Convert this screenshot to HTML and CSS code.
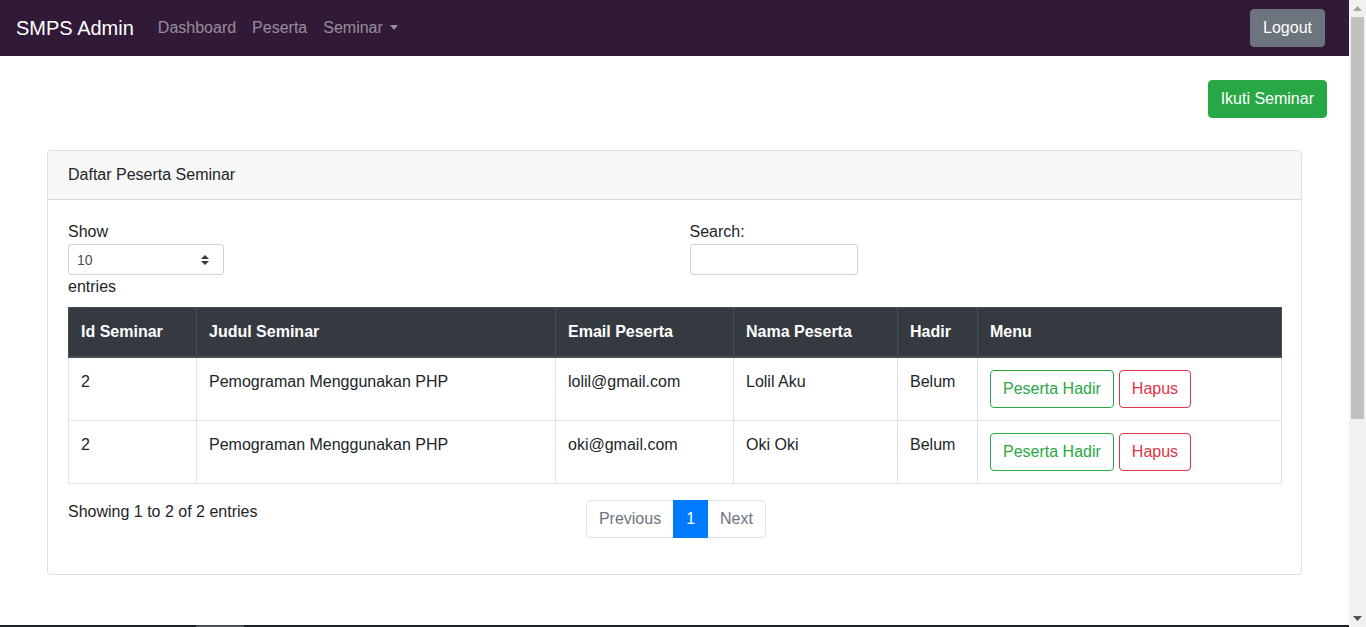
FILE: index.html
```html
<!DOCTYPE html>
<html lang="id">
<head>
<meta charset="utf-8">
<title>SMPS Admin - Daftar Peserta Seminar</title>
<link rel="stylesheet" href="styles.css">
</head>
<body>
<div class="screen">
  <div class="page">
    <nav class="navbar">
      <div class="nav-left">
        <a class="brand" href="#">SMPS Admin</a>
        <ul class="nav-links">
          <li><a class="nav-link" href="#">Dashboard</a></li>
          <li><a class="nav-link" href="#">Peserta</a></li>
          <li><a class="nav-link dropdown" href="#">Seminar<span class="caret"></span></a></li>
        </ul>
      </div>
      <button class="btn btn-secondary logout">Logout</button>
    </nav>

    <main class="content">
      <div class="actions">
        <button class="btn btn-success">Ikuti Seminar</button>
      </div>

      <section class="card">
        <div class="card-header">Daftar Peserta Seminar</div>
        <div class="card-body">
          <div class="row">
            <div class="col col-half">
              <div class="dt-length">
                <div>Show</div>
                <div class="select-box">
                  <select class="select">
                    <option>10</option>
                    <option>25</option>
                    <option>50</option>
                    <option>100</option>
                  </select>
                  <svg class="select-icon" width="8" height="10" viewBox="0 0 8 10"><path d="M4 0 L8 4 H0 Z M0 6 H8 L4 10 Z" fill="#343a40"/></svg>
                </div>
                <div>entries</div>
              </div>
            </div>
            <div class="col col-half">
              <div class="dt-filter">
                <div>Search:</div>
                <input class="search-input" type="search">
              </div>
            </div>
          </div>

          <table class="table">
            <colgroup>
              <col class="w-id"><col class="w-judul"><col class="w-email"><col class="w-nama"><col class="w-hadir"><col class="w-menu">
            </colgroup>
            <thead>
              <tr>
                <th>Id Seminar</th>
                <th>Judul Seminar</th>
                <th>Email Peserta</th>
                <th>Nama Peserta</th>
                <th>Hadir</th>
                <th>Menu</th>
              </tr>
            </thead>
            <tbody>
              <tr>
                <td>2</td>
                <td>Pemograman Menggunakan PHP</td>
                <td>lolil@gmail.com</td>
                <td>Lolil Aku</td>
                <td>Belum</td>
                <td><div class="menu-btns"><button class="btn btn-outline-success">Peserta Hadir</button><button class="btn btn-outline-danger">Hapus</button></div></td>
              </tr>
              <tr>
                <td>2</td>
                <td>Pemograman Menggunakan PHP</td>
                <td>oki@gmail.com</td>
                <td>Oki Oki</td>
                <td>Belum</td>
                <td><div class="menu-btns"><button class="btn btn-outline-success">Peserta Hadir</button><button class="btn btn-outline-danger">Hapus</button></div></td>
              </tr>
            </tbody>
          </table>

          <div class="row">
            <div class="col col-5">
              <div class="dt-info">Showing 1 to 2 of 2 entries</div>
            </div>
            <div class="col col-7">
              <ul class="pagination">
                <li class="page-item disabled"><a class="page-link first" href="#">Previous</a></li>
                <li class="page-item active"><a class="page-link" href="#">1</a></li>
                <li class="page-item disabled"><a class="page-link last" href="#">Next</a></li>
              </ul>
            </div>
          </div>
        </div>
      </section>
    </main>

    <footer class="footer"><span class="footer-mark"></span></footer>
  </div>

  <div class="scrollbar">
    <div class="sb-btn"><svg width="9" height="5" viewBox="0 0 9 5"><path d="M0 5 L4.5 0 L9 5 Z" fill="#a3a3a3"/></svg></div>
    <div class="sb-thumb"></div>
    <div class="sb-track"></div>
    <div class="sb-btn"><svg width="9" height="5" viewBox="0 0 9 5"><path d="M0 0 L9 0 L4.5 5 Z" fill="#505050"/></svg></div>
  </div>
</div>
</body>
</html>
```
FILE: styles.css
```css
* { box-sizing: border-box; }

html, body {
  margin: 0;
  padding: 0;
}

body {
  font-family: "Liberation Sans", Arial, sans-serif;
  font-size: 16px;
  line-height: 1.5;
  color: #212529;
  background: #fff;
}

.screen {
  display: flex;
  width: 1366px;
  height: 627px;
  overflow: hidden;
}

.page {
  flex: 1;
  min-width: 0;
  display: flex;
  flex-direction: column;
}

/* Navbar */
.navbar {
  height: 56px;
  flex-shrink: 0;
  background: #301a37;
  display: flex;
  align-items: center;
  justify-content: space-between;
  padding: 0 16px;
}

.nav-left {
  display: flex;
  align-items: center;
}

.brand {
  color: #fff;
  text-decoration: none;
  font-size: 20px;
  line-height: 30px;
  margin-right: 16px;
}

.nav-links {
  list-style: none;
  margin: 0;
  padding: 0;
  display: flex;
}

.nav-link {
  display: block;
  padding: 8px 8px;
  color: rgba(255, 255, 255, 0.5);
  text-decoration: none;
}

.caret {
  display: inline-block;
  margin-left: 7px;
  vertical-align: 3px;
  border-top: 5px solid rgba(255, 255, 255, 0.5);
  border-left: 4.5px solid transparent;
  border-right: 4.5px solid transparent;
}

/* Buttons */
.btn {
  display: inline-block;
  font-family: inherit;
  font-size: 16px;
  line-height: 24px;
  padding: 6px 12px;
  border: 1px solid transparent;
  border-radius: 4px;
  background: transparent;
  cursor: pointer;
  white-space: nowrap;
}

.btn-secondary {
  background: #6c757d;
  border-color: #6c757d;
  color: #fff;
}

.logout {
  margin-right: 8px;
}

.btn-success {
  background: #28a745;
  border-color: #28a745;
  color: #fff;
}

.btn-outline-success {
  color: #28a745;
  border-color: #28a745;
}

.btn-outline-danger {
  color: #dc3545;
  border-color: #dc3545;
}

/* Content */
.content {
  flex-shrink: 0;
}

.actions {
  display: flex;
  justify-content: flex-end;
  padding: 24px 22px 0 0;
}

.card {
  margin: 32px 47px 0;
  border: 1px solid rgba(0, 0, 0, 0.125);
  border-radius: 4px;
  background: #fff;
}

.card-header {
  padding: 12px 20px;
  background: rgba(0, 0, 0, 0.03);
  border-bottom: 1px solid rgba(0, 0, 0, 0.125);
  border-radius: 3px 3px 0 0;
}

.card-body {
  padding: 20px;
}

.row {
  display: flex;
  margin: 0 -15px;
}

.col {
  padding: 0 15px;
}

.col-half { flex: 0 0 50%; }
.col-5 { flex: 0 0 41.6667%; }
.col-7 { flex: 0 0 58.3333%; }

.select-box {
  display: flex;
  align-items: center;
  width: 156px;
  height: 31px;
  border: 1px solid #ced4da;
  border-radius: 3px;
  padding: 0 14px 0 8px;
  background: #fff;
}

.select {
  flex: 1;
  min-width: 0;
  border: 0;
  outline: 0;
  background: transparent;
  font-family: inherit;
  font-size: 14px;
  color: #495057;
  padding: 0;
  appearance: none;
  -webkit-appearance: none;
}

.select-icon {
  flex-shrink: 0;
}

.search-input {
  display: block;
  width: 168px;
  height: 31px;
  border: 1px solid #ced4da;
  border-radius: 3px;
  padding: 4px 8px;
  font-family: inherit;
  font-size: 14px;
  outline: 0;
}

/* Table */
.table {
  width: 100%;
  table-layout: fixed;
  border-collapse: collapse;
  margin: 8px 0 16px;
}

.w-id { width: 128px; }
.w-judul { width: 359px; }
.w-email { width: 178px; }
.w-nama { width: 164px; }
.w-hadir { width: 80px; }
.w-menu { width: 304px; }

.table th,
.table td {
  padding: 12px;
  text-align: left;
  vertical-align: top;
  border: 1px solid #dee2e6;
}

.table thead th {
  background: #343a40;
  color: #fff;
  font-weight: bold;
  border-color: #454d55;
  border-bottom-width: 2px;
}

.menu-btns {
  display: flex;
  gap: 5px;
}

/* Footer controls */
.dt-info {
  padding-top: 0;
}

.pagination {
  list-style: none;
  display: flex;
  margin: 0 0 16px;
  padding: 0;
}

.page-link {
  display: block;
  padding: 8px 12px;
  line-height: 20px;
  border: 1px solid #dee2e6;
  margin-left: -1px;
  color: #6c757d;
  text-decoration: none;
  background: #fff;
}

.page-link.first {
  margin-left: 0;
  border-radius: 4px 0 0 4px;
}

.page-link.last {
  border-radius: 0 4px 4px 0;
}

.page-item.active .page-link {
  background: #007bff;
  border-color: #007bff;
  color: #fff;
  position: relative;
}

/* Page footer */
.footer {
  margin-top: 50px;
  height: 60px;
  flex-shrink: 0;
  background: #1d2125;
}

.footer-mark {
  display: block;
  margin-left: 196px;
  width: 48px;
  height: 2px;
  background: #4a5056;
}

/* Fake scrollbar */
.scrollbar {
  width: 17px;
  flex-shrink: 0;
  background: #f1f1f1;
  display: flex;
  flex-direction: column;
  align-items: center;
}

.sb-btn {
  height: 17px;
  width: 17px;
  display: flex;
  align-items: center;
  justify-content: center;
  flex-shrink: 0;
}

.sb-thumb {
  width: 13px;
  height: 402px;
  background: #c1c1c1;
  flex-shrink: 0;
}

.sb-track {
  flex: 1;
}
```
